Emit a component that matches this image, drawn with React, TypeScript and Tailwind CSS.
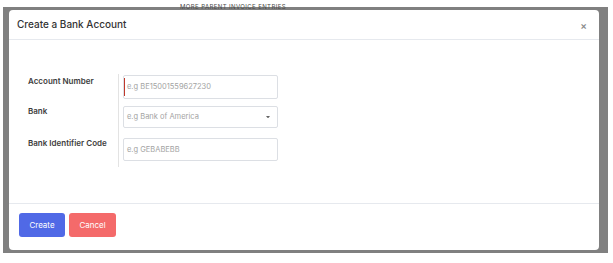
import React from "react";

const fields = [
  { label: "Account Number", placeholder: "e.g BE15001559627230" },
  { label: "Bank", placeholder: "e.g Bank of America" },
  { label: "Bank Identifier Code", placeholder: "e.g GEBABEBB" },
];

export default function App() {
  return (
    <div
      className="w-[613px] h-[263px] bg-white pt-[7px] pl-[3px] overflow-hidden"
      style={{ fontFamily: "Inter, 'Open Sans', sans-serif" }}
    >
      <div className="relative w-[605px] h-[246px] bg-[#808080] px-[6px] pt-[3px]">
        {/* parent page text peeking above the modal */}
        <div className="absolute left-[177px] top-[-3px] text-[6px] leading-[6px] tracking-[0.4px] text-[#4a4a4a] uppercase">
          More parent invoice entries
        </div>
        <div className="relative w-[590px] h-[240px] bg-white rounded-[4px] flex flex-col">
          {/* header */}
          <div className="h-[30px] border-b border-[#e6e9ee] flex items-center justify-between pl-[8px] pr-[12px]">
            <h2 className="text-[10px] font-medium text-[#333]">Create a Bank Account</h2>
            <span className="text-[10px] leading-none font-semibold text-[#8a8a8a]">×</span>
          </div>

          {/* body */}
          <div className="flex-1 pt-[34px] pl-[19px]">
            {fields.map((f, i) => (
              <div key={f.label} className="flex">
                <div
                  className={`w-[91px] border-r border-[#e3e3e3] text-[8px] font-semibold text-[#3d3d3d] leading-[12px] ${
                    i === 0 ? "pt-[1px] h-[29px]" : i === 1 ? "pt-[2px] h-[31px]" : "pt-[3px] h-[33px]"
                  }`}
                >
                  {f.label}
                </div>
                <div
                  className={`ml-[4px] ${
                    i === 0 ? "pt-[1px]" : i === 1 ? "pt-[3px]" : "pt-[4px]"
                  }`}
                >
                  <div
                    className={`relative w-[155px] border border-[#dcdfe4] rounded-[2px] flex items-center pl-[3px] pr-[7px] text-[7.5px] text-[#a3a3a3] ${
                      i === 0 ? "h-[24px]" : i === 1 ? "h-[22px]" : "h-[23px]"
                    }`}
                  >
                    {i === 0 && (
                      <span className="absolute left-[0px] top-[2px] bottom-[2px] w-[1px] bg-[#c0392b]" />
                    )}
                    <span className="flex-1">{f.placeholder}</span>
                    {i === 1 && (
                      <svg width="4" height="2.5" viewBox="0 0 4 2.5">
                        <path d="M0 0 L4 0 L2 2.5 Z" fill="#666" />
                      </svg>
                    )}
                  </div>
                </div>
              </div>
            ))}
          </div>

          {/* footer */}
          <div className="h-[47px] border-t border-[#e6e9ee] flex items-start gap-[4px] pl-[10px] pt-[9px]">
            <button className="w-[46px] h-[24px] rounded-[3px] bg-[#5069e6] text-white text-[8px]">
              Create
            </button>
            <button className="w-[47px] h-[24px] rounded-[3px] bg-[#f46a6a] text-white text-[8px]">
              Cancel
            </button>
          </div>
        </div>
      </div>
    </div>
  );
}
